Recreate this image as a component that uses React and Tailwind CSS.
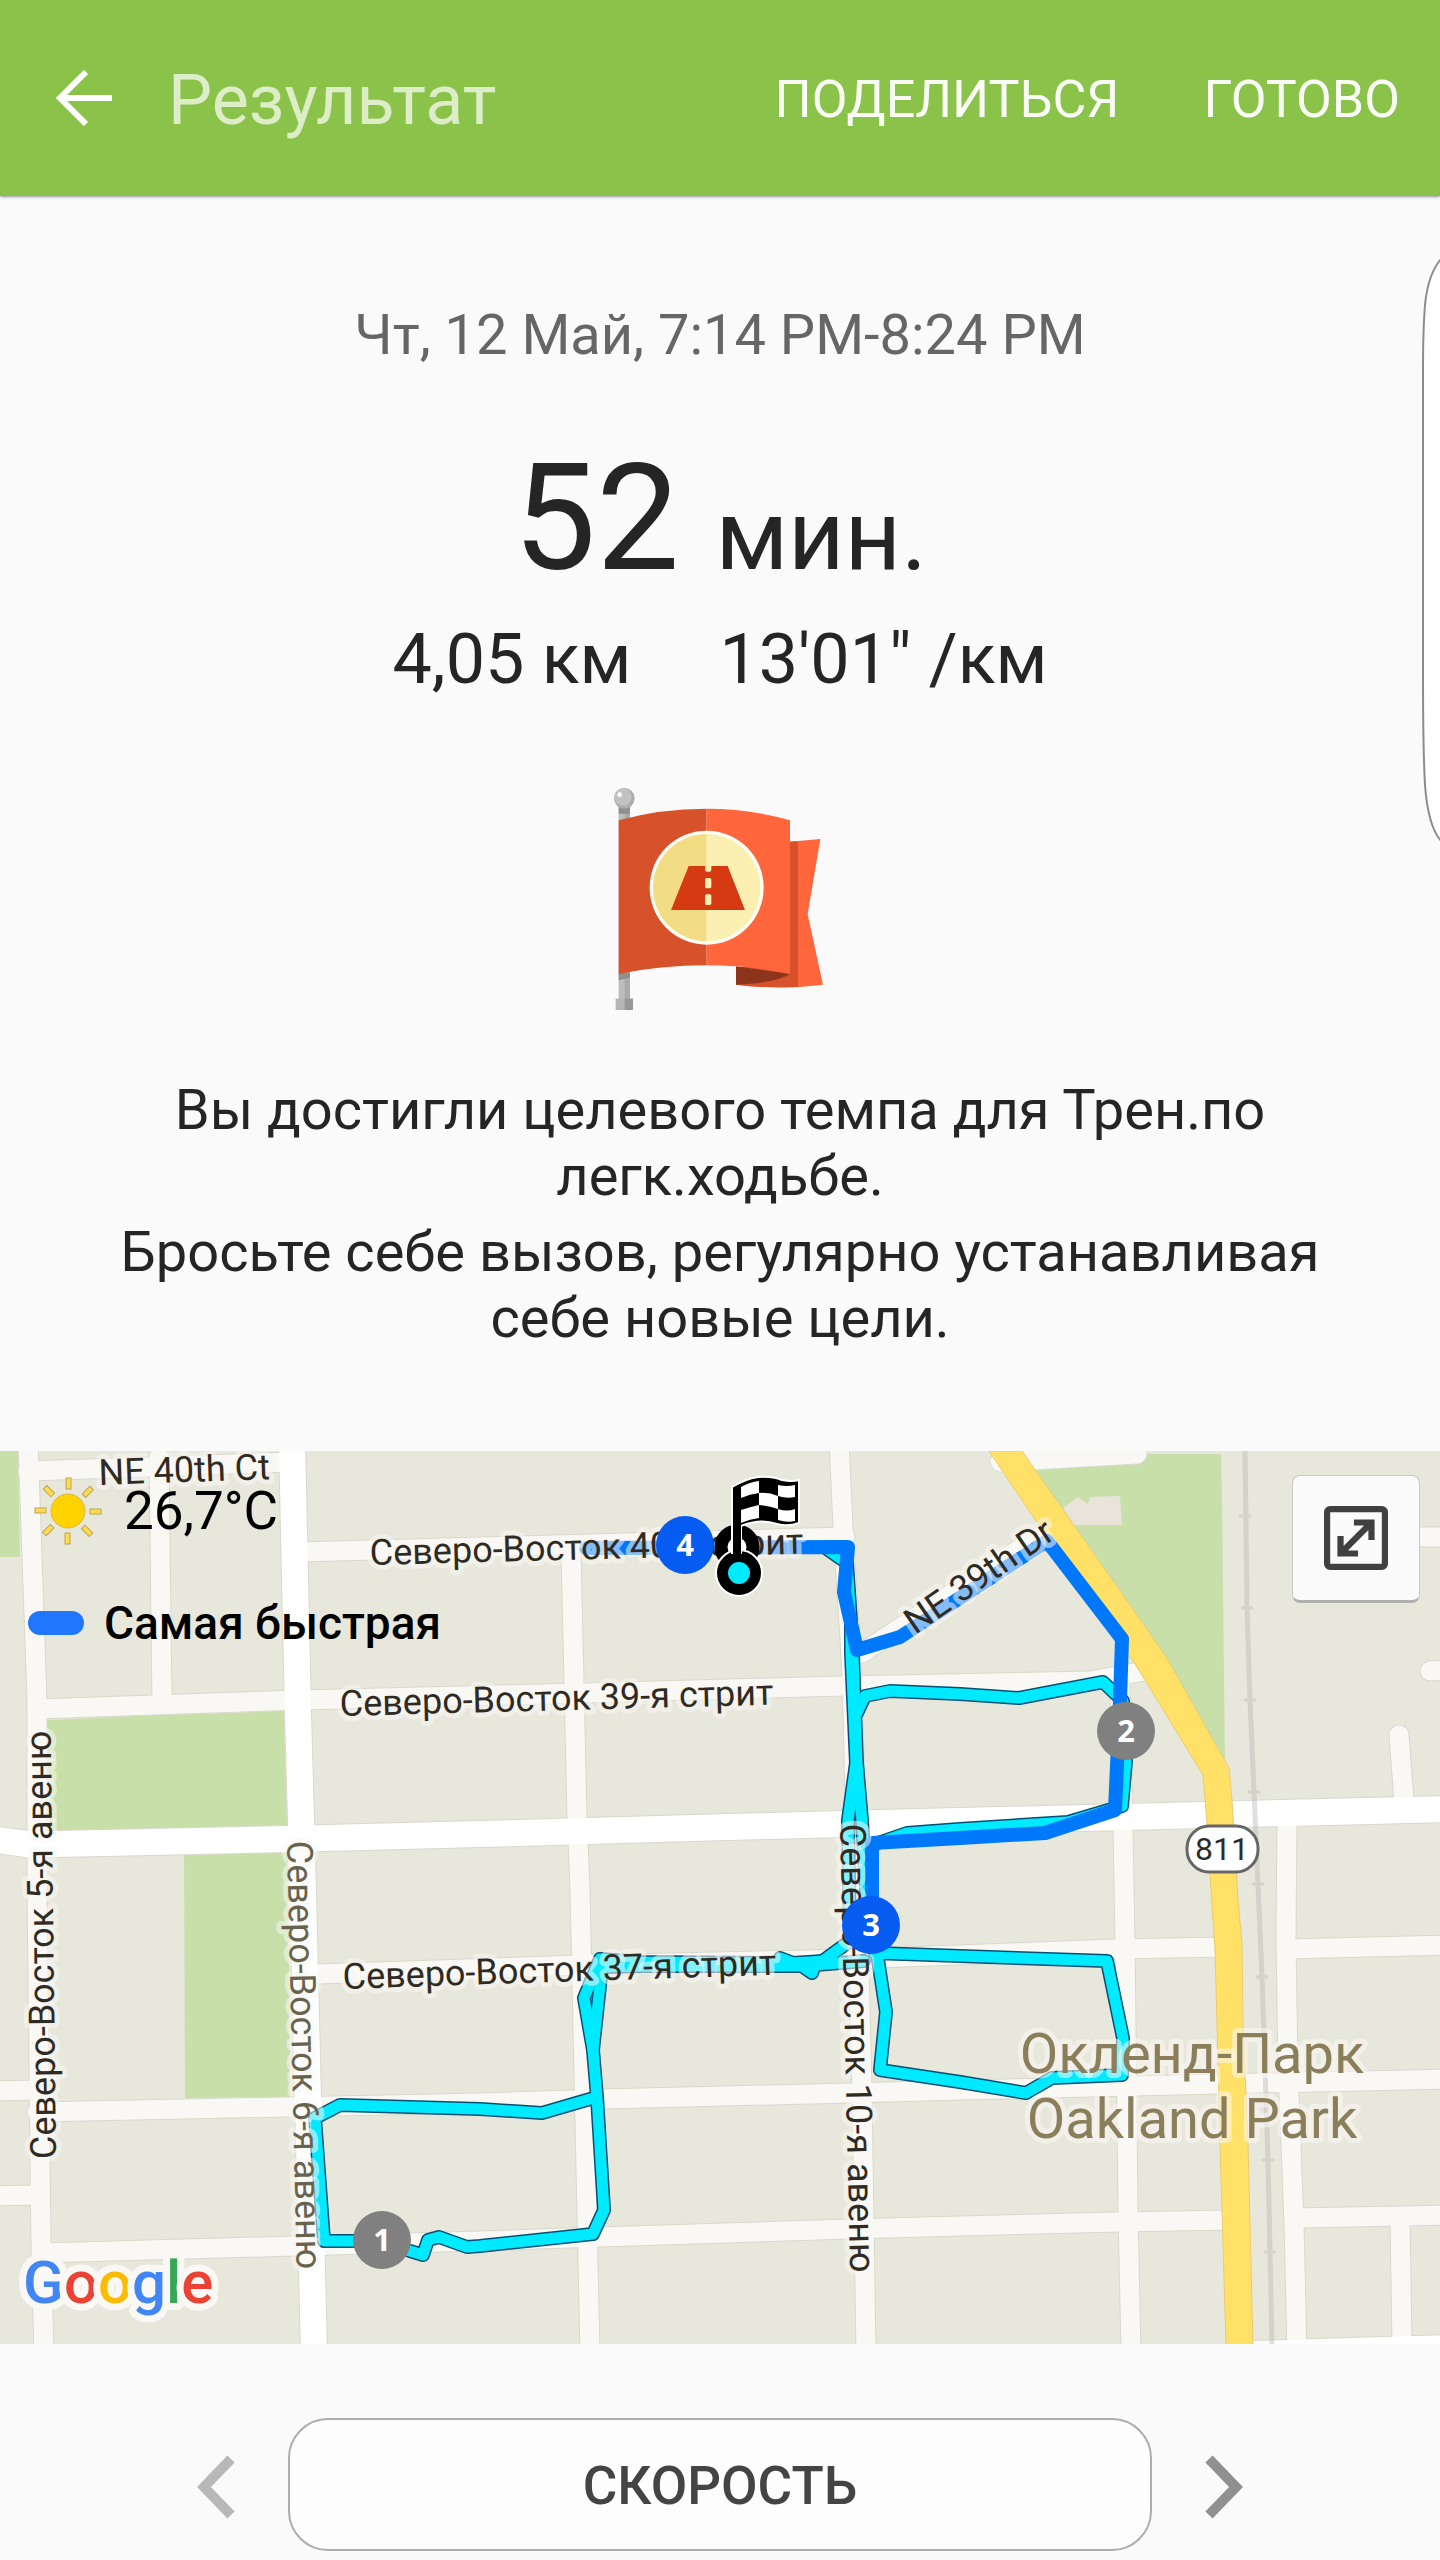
import { useState } from 'react';

const METRICS = ['СКОРОСТЬ', 'ПУЛЬС', 'ВЫСОТА'];

const PARKS = [
  '0,0 18,0 20,106 0,106',
  '47,269 160,264 284,260 287,375 50,380',
  '184,404 288,401 290,646 185,647',
  '1000,3 1221,3 1222,50 1225,312 1160,210',
];

const SIDE_ROADS = [
  '28,-10 37,249 37,439 41,792 44,903',
  '159,6 162,250',
  '571,100 574,232 577,366 580,439 590,903',
  '839,-10 843,76 852,222 862,639 866,903',
  '1120,235 1122,322 1125,489 1128,759 1131,903',
  '1287,360 1286,489 1288,619 1294,772 1297,903',
  '1400,767 1402,893',
  '28,20 292,11',
  '300,101 845,86',
  '37,258 152,254 300,249 584,242 842,235 1090,230 1145,220',
  '318,523 580,514 850,508 1115,498 1225,496',
  '1287,498 1450,494',
  '-10,640 37,639',
  '37,661 287,656 480,652 603,648 850,642 960,639 1218,633 1450,628',
  '-10,745 37,744',
  '41,802 295,795 480,790 600,786 850,778 960,775 1118,771 1230,769',
  '1294,767 1450,764',
  '862,202 1050,78',
  '1000,11 1137,3',
  '1399,284 1404,350',
  '1430,220 1450,219',
  '1400,86 1450,86',
];

const MAIN_ROADS = [
  '292,-10 298,262 303,439 314,903',
  '-10,388 27,393 57,393 287,388 480,383 840,373 1203,364 1450,358',
  '1253,903 1450,897',
];

const HIGHWAY =
  '1022,0 1160,197 1168,209 1229,317 1232,349 1238,449 1242,492 1243,572 1248,692 1253,894 1226,894 1220,692 1217,572 1215,499 1211,439 1207,372 1203,324 1137,216 1040,76 989,0';

const RAIL_TICKS = [
  [1245, 65],
  [1247, 157],
  [1250, 249],
  [1254, 341],
  [1258, 433],
  [1262, 526],
  [1268, 709],
  [1270, 801],
];

const TRACK = [
  '827,98 847,112 851,170 851,202 856,312 848,369 850,490 820,512 780,512 640,511 600,508 584,547 593,599 597,646 604,759 593,783 480,795 467,796 439,786 428,789 423,804 410,800 382,790 324,790 315,667 340,654 480,658 542,662 597,646',
  '593,599 602,516 640,515 780,515 802,515 812,522 815,514 864,510',
  '780,507 793,512 824,510',
  '853,205 857,312 862,370 868,470',
  '857,262 865,245 890,240 960,243 1019,247 1103,231 1123,250 1126,310 1122,355 1068,371 960,378 907,382 872,394',
  '875,502 960,505 1107,510 1123,587 1122,624 1052,627 1026,642 960,631 880,619 886,561 877,502',
];

const FASTEST =
  '586,97 848,96 844,141 857,199 900,186 1047,90 1122,188 1120,249 1115,359 1045,382 960,387 872,392 872,470';

const STREETS = [
  { text: 'NE 40th Ct', at: 'translate(99 34) rotate(-2)' },
  { text: 'Северо-Восток 40-я стрит', at: 'translate(370 114) rotate(-1.5)' },
  { text: 'Северо-Восток 39-я стрит', at: 'translate(340 265) rotate(-1.5)' },
  { text: 'Северо-Восток 37-я стрит', at: 'translate(343 538) rotate(-1.9)' },
  { text: 'Северо-Восток 5-я авеню', at: 'translate(56 708) rotate(-90.7)' },
  { text: 'Северо-Восток 6-я авеню', at: 'translate(287 390) rotate(88.7)', soft: true },
  { text: 'Северо-Восток 10-я авеню', at: 'translate(840 373) rotate(88.7)' },
  { text: 'NE 39th Dr', at: 'translate(915 184) rotate(-34.5)' },
];

const KM_MARKS = [
  { n: 1, x: 382, y: 789, fast: false },
  { n: 2, x: 1126, y: 280, fast: false },
  { n: 3, x: 871, y: 474, fast: true },
  { n: 4, x: 685, y: 94, fast: true },
];

const GoalFlag = () => (
  <svg viewBox="0 0 960 840" className="w-80 h-70" aria-hidden="true">
    <rect x="176" y="130" width="34" height="590" fill="#bdbdbd" />
    <rect x="194" y="130" width="16" height="590" fill="#a9a9a9" />
    <path d="M176 138h34v20h-34zM176 636h34v14l-34 8z" fill="#8f8f8f" />
    <rect x="167" y="713" width="52" height="34" fill="#b5b5b5" />
    <rect x="194" y="713" width="25" height="34" fill="#979797" />
    <circle cx="193" cy="112" r="31" fill="#adadad" />
    <circle cx="189" cy="108" r="26" fill="#c2c2c2" />
    <circle cx="179" cy="101" r="7" fill="#fff" />
    <path d="M600 246Q700 243 781 234L743 460L789 671Q660 688 528 671V618H600Z" fill="#ff663c" />
    <path d="M600 246Q660 245 714 240V678Q620 682 528 671V618H600Z" fill="#d7522b" />
    <path d="M528 616L690 639Q640 668 528 671Z" fill="#8d351c" />
    <path d="M176 178Q300 143 440 143V613Q300 613 176 639Z" fill="#d7522b" />
    <path d="M440 143Q570 143 690 178V639Q570 613 440 613Z" fill="#ff663c" />
    <circle cx="440" cy="380" r="171" fill="#fffdf5" />
    <path d="M440 219A161 161 0 0 0 440 541Z" fill="#f3dd84" />
    <path d="M440 219A161 161 0 0 1 440 541Z" fill="#fbf0b2" />
    <path d="M386 315H435V326Q435 332 441 332H448Q454 332 454 326V315H503L555 447H333Z" fill="#d63a12" />
    <rect x="435" y="351" width="19" height="31" rx="5" fill="#fbf0b2" />
    <rect x="435" y="400" width="19" height="32" rx="5" fill="#fbf0b2" />
  </svg>
);

const Sun = () => (
  <svg viewBox="0 0 72 72" className="w-18 h-18" aria-hidden="true">
    {[0, 45, 90, 135, 180, 225, 270, 315].map((angle) => (
      <rect
        key={angle}
        x="34"
        y="3"
        width="5"
        height="11"
        fill="#ffdb4d"
        stroke="#b9a45a"
        strokeWidth="1"
        transform={`rotate(${angle} 36 36)`}
      />
    ))}
    <circle cx="36" cy="36" r="17" fill="#ffd200" stroke="#d9b64a" strokeWidth="1" />
  </svg>
);

const RouteMap = () => (
  <svg viewBox="0 0 1440 893" className="block w-full h-auto" role="img" aria-label="Карта маршрута">
    <rect width="1440" height="893" fill="#e8e7db" />
    {PARKS.map((points) => (
      <polygon key={points} points={points} fill="#c8dfaa" />
    ))}
    <polygon points="1063,57 1078,46 1088,53 1090,46 1120,45 1122,74 1073,74" fill="#e8e4da" />

    {/* roads: casing first, then the surface */}
    <g fill="none" strokeLinejoin="round">
      {SIDE_ROADS.map((points) => (
        <polyline key={points} points={points} stroke="#d9d8cd" strokeWidth="21" strokeLinecap="round" />
      ))}
      {MAIN_ROADS.map((points) => (
        <polyline key={points} points={points} stroke="#d9d8cd" strokeWidth="28" />
      ))}
      {SIDE_ROADS.map((points) => (
        <polyline key={points} points={points} stroke="#f9f8f4" strokeWidth="19" strokeLinecap="round" />
      ))}
      {MAIN_ROADS.map((points) => (
        <polyline key={points} points={points} stroke="#fff" strokeWidth="26" />
      ))}
    </g>
    <polygon points={HIGHWAY} fill="#ffe168" stroke="#e9cb70" strokeWidth="1" />
    <g stroke="#b4b3b4" opacity="0.4">
      <polyline
        points="1245,0 1247,157 1250,249 1254,341 1258,433 1262,526 1268,709 1270,801 1272,893"
        fill="none"
        strokeWidth="5"
      />
      {RAIL_TICKS.map(([x, y]) => (
        <line key={y} x1={x - 6} x2={x + 6} y1={y} y2={y} strokeWidth="3" />
      ))}
    </g>

    {/* recorded track */}
    <g fill="none" strokeLinejoin="round" strokeLinecap="round">
      {TRACK.map((points) => (
        <polyline key={points} points={points} stroke="#084f74" strokeWidth="14" />
      ))}
      {TRACK.map((points) => (
        <polyline key={points} points={points} stroke="#00eaff" strokeWidth="11" />
      ))}
      <polyline points={FASTEST} stroke="#0078fb" strokeWidth="14" />
    </g>

    {/* labels */}
    <g
      fontFamily="Roboto, sans-serif"
      stroke="#f9f8f4"
      strokeOpacity="0.55"
      strokeWidth="10"
      strokeLinejoin="round"
      style={{ paintOrder: 'stroke' }}
    >
      {STREETS.map(({ text, at, soft }) => (
        <text key={text} transform={at} fontSize="36" fill={soft ? '#68634e' : '#2f2a22'}>
          {text}
        </text>
      ))}
      <g fontSize="56" fill="#8b7e5b" textAnchor="middle">
        <text x="1192" y="622">Окленд-Парк</text>
        <text x="1192" y="687">Oakland Park</text>
      </g>
    </g>

    <rect x="1187" y="375" width="71" height="46" rx="22" fill="#fff" stroke="#666" strokeWidth="3" />
    <text x="1222" y="409" fontFamily="Roboto, sans-serif" fontSize="32" fill="#2b2b2b" textAnchor="middle">
      811
    </text>

    {KM_MARKS.map(({ n, x, y, fast }) => (
      <g key={n}>
        <circle cx={x} cy={y} r="29" fill={fast ? '#065cf0' : '#808080'} />
        <text
          x={x}
          y={y + 11}
          fontFamily="Open Sans, sans-serif"
          fontWeight="700"
          fontSize="31"
          fill="#fff"
          textAnchor="middle"
        >
          {n}
        </text>
      </g>
    ))}

    {/* start and finish */}
    <circle cx="737" cy="96" r="16" fill="#fff" stroke="#000" strokeWidth="13" />
    <g stroke="#fff" strokeWidth="2">
      <circle cx="739" cy="122" r="23" fill="#000" />
      <path d="M732 36Q745 28 758 26Q772 25 782 29Q792 31 799 29V72Q788 76 777 73Q760 67 741 75V102H732Z" fill="#000" />
    </g>
    <rect x="733" y="60" width="8" height="50" fill="#000" />
    <circle cx="739" cy="122" r="11" fill="#00eaff" />
    <path
      fill="#fff"
      d="M741 36Q750 31 759 30V42Q750 43 741 47ZM741 59Q750 56 759 54V67Q750 68 741 72ZM759 42Q769 41 778 45V58Q769 55 759 54ZM778 34Q787 36 795 34V46Q787 48 778 45ZM778 58Q787 61 795 58V70Q787 72 778 69Z"
    />

    <text
      x="23"
      y="852"
      fontFamily="Roboto, sans-serif"
      fontSize="60"
      fontWeight="500"
      stroke="#f9f8f4"
      strokeWidth="14"
      strokeLinejoin="round"
      style={{ paintOrder: 'stroke' }}
    >
      <tspan fill="#4285f4">G</tspan>
      <tspan fill="#ea4335">o</tspan>
      <tspan fill="#fbbc05">o</tspan>
      <tspan fill="#4285f4">g</tspan>
      <tspan fill="#34a853">l</tspan>
      <tspan fill="#ea4335">e</tspan>
    </text>
  </svg>
);

const App = () => {
  const [metric, setMetric] = useState(0);

  return (
    <div className="relative min-h-screen overflow-hidden bg-[#fafafa] font-['Roboto',sans-serif] text-[#252525]">
      <header className="flex items-center h-49 pl-14 pr-10 bg-[#8bc34a] shadow-sm shadow-black/30">
        <button type="button" aria-label="Назад" className="cursor-pointer">
          <svg viewBox="0 0 56 56" className="w-14 h-14" fill="none" stroke="#fff" strokeWidth="6">
            <path d="M56 28H5M30 2L4 28L30 54" />
          </svg>
        </button>
        <h1 className="ml-14 pt-1 text-[70px] leading-20 text-[#dcedc8]">Результат</h1>
        <nav className="ml-auto flex gap-21 pt-1 text-[52px] leading-16 text-[#fafdf6]">
          <button type="button" className="cursor-pointer">ПОДЕЛИТЬСЯ</button>
          <button type="button" className="cursor-pointer">ГОТОВО</button>
        </nav>
      </header>

      {/* edge panel handle */}
      <svg viewBox="0 0 20 600" className="absolute right-0 top-[250px] w-5 h-[600px]" aria-hidden="true">
        <path d="M21 9Q8 24 5 55Q3 80 3 120V420Q3 500 5 535Q8 576 21 591" fill="#fff" stroke="#8c8c8c" strokeWidth="2" />
      </svg>

      <main>
        <section className="flex flex-col items-center pt-[107px] text-center">
          <p className="text-[56px] leading-16 text-[#666]">Чт, 12 Май, 7:14 PM-8:24 PM</p>
          <p className="mt-[78px] flex items-baseline gap-9 text-[148px] leading-37">
            52 <span className="text-[98px] leading-24">мин.</span>
          </p>
          <p className="mt-6 flex gap-22 text-[70px] leading-21">
            <span>4,05 км</span>
            <span>13'01" /км</span>
          </p>
          <div className="mt-15">
            <GoalFlag />
          </div>
          <div className="mt-9 px-24 space-y-2.5 text-[56px] leading-[66px]">
            <p>Вы достигли целевого темпа для Трен.по легк.ходьбе.</p>
            <p>Бросьте себе вызов, регулярно устанавливая себе новые цели.</p>
          </div>
        </section>

        <section className="relative mt-25 text-black">
          <RouteMap />
          <div className="absolute left-7 top-6 flex flex-col gap-12">
            <div className="flex items-center gap-5 pl-1">
              <Sun />
              <span className="text-[53px] leading-16">26,7°C</span>
            </div>
            <div className="flex items-center gap-5">
              <span className="w-14 h-6 rounded-xl bg-[#2176ff]" />
              <span className="text-[46px] leading-14 font-medium">Самая быстрая</span>
            </div>
          </div>
          <button
            type="button"
            aria-label="Развернуть карту"
            className="absolute right-5 top-6 flex items-center justify-center w-32 h-32 rounded-lg border border-[#c9c9c4] border-b-3 border-b-[#b0b0ac] bg-[#fafafa] cursor-pointer"
          >
            <svg viewBox="0 0 62 62" className="w-16 h-16" fill="none" stroke="#404040">
              <rect x="3" y="3" width="56" height="56" rx="3" strokeWidth="6" />
              <path d="M29 16H46V33M46 16L16 46M16 29V46H33" strokeWidth="6" />
            </svg>
          </button>
        </section>

        <section className="flex items-center justify-center gap-[53px] pt-[74px] pb-2">
          <button
            type="button"
            aria-label="Предыдущий график"
            onClick={() => setMetric(Math.max(metric - 1, 0))}
            className="pt-1 cursor-pointer"
          >
            <svg viewBox="0 0 38 64" className="w-[38px] h-16" fill="none" stroke="#b8b8b8" strokeWidth="10">
              <path d="M34 4L7 32L34 60" />
            </svg>
          </button>
          <button
            type="button"
            className="w-3/5 h-[133px] pt-1 rounded-[40px] border-2 border-[#adadad] bg-[#fdfdfd] text-[53px] font-medium text-[#444] cursor-pointer"
          >
            {METRICS[metric]}
          </button>
          <button
            type="button"
            aria-label="Следующий график"
            onClick={() => setMetric(Math.min(metric + 1, METRICS.length - 1))}
            className="pt-1 cursor-pointer"
          >
            <svg viewBox="0 0 38 64" className="w-[38px] h-16" fill="none" stroke="#909090" strokeWidth="10">
              <path d="M4 4L31 32L4 60" />
            </svg>
          </button>
        </section>
      </main>
    </div>
  );
};

export default App;
